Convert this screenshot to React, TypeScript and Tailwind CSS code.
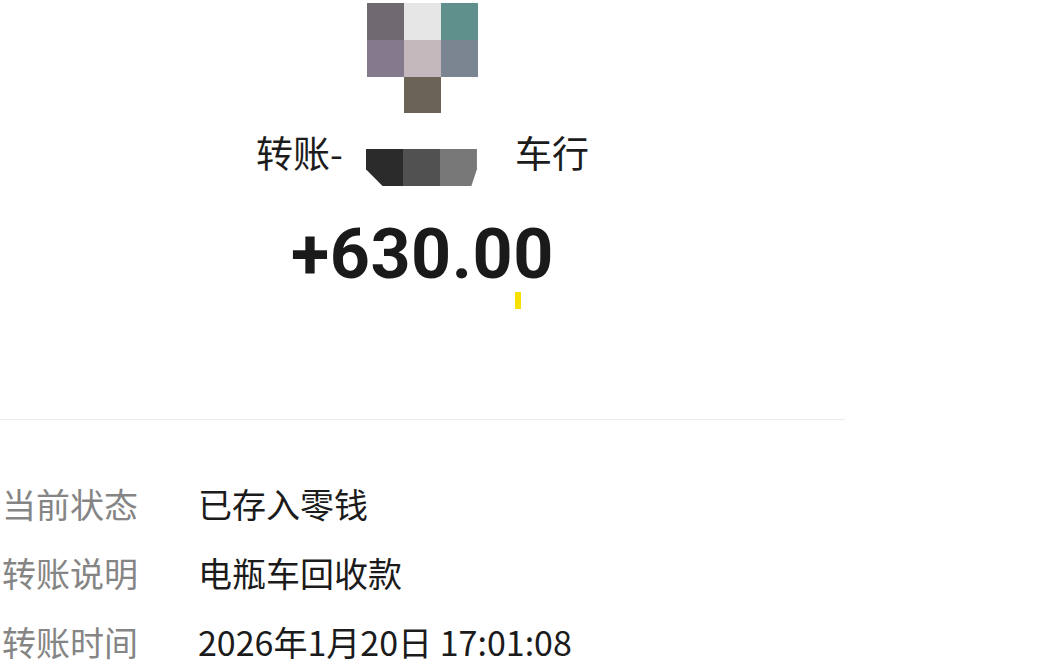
import React from "react";

const avatarRows = [
  ["#6e6a6f", "#e6e6e6", "#5f908c"],
  ["#857a8b", "#c4b8bc", "#7b8591"],
];

const details = [
  { label: "当前状态", value: "已存入零钱" },
  { label: "转账说明", value: "电瓶车回收款" },
  { label: "转账时间", value: "2026年1月20日 17:01:08" },
];

const cjk = "font-['Noto_Sans_CJK_SC','Noto_Sans',sans-serif]";

function Avatar() {
  return (
    <div className="flex flex-col items-center">
      {avatarRows.map((row, i) => (
        <div key={i} className="flex">
          {row.map((c, j) => (
            <div key={j} className="w-[37px] h-[37px]" style={{ backgroundColor: c }} />
          ))}
        </div>
      ))}
      <div className="w-[37px] h-[36px] bg-[#6b6456]" />
    </div>
  );
}

function Title() {
  return (
    <div className={`flex items-start justify-center text-[37px] leading-[44px] text-[#1c1c1c] ${cjk}`}>
      <span>转账-</span>
      {/* blurred name */}
      <span className="w-[172px] flex">
        <span className="ml-[23px] mt-[19px] flex h-[37px] [clip-path:polygon(0_0,100%_0,100%_55%,95%_100%,15%_100%,0_55%)]">
          <span className="w-[37px] bg-[#2b2b2b]" />
          <span className="w-[37px] bg-[#515151]" />
          <span className="w-[37px] bg-[#787878]" />
        </span>
      </span>
      <span>车行</span>
    </div>
  );
}

export default function App() {
  return (
    <div className="w-[1045px] h-[661px] bg-white overflow-hidden">
      <div className="w-[845px] flex flex-col">
        <div className="pt-[3px] flex flex-col items-center">
          <Avatar />
          <div className="mt-[17px]">
            <Title />
          </div>
          <div className="relative mt-[33px]">
            <span className="block font-['Roboto',sans-serif] font-bold text-[70px] leading-[70px] text-[#1a1a1a] tracking-[0.5px]">
              +630.00
            </span>
            <span className="absolute top-full right-[33px] mt-[3px] w-[6px] h-[17px] bg-[#f5e000]" />
          </div>
        </div>

        <div className="mt-[130px] h-px bg-[#ebebeb]" />

        <div className={`pt-[49px] flex flex-col ${cjk}`}>
          {details.map((d) => (
            <div key={d.label} className="flex items-center text-[34px] leading-[69px]">
              <span className="w-[198px] pl-[2px] text-[#858585]">{d.label}</span>
              <span className="text-[#1b1b1b]">{d.value}</span>
            </div>
          ))}
        </div>
      </div>
    </div>
  );
}
